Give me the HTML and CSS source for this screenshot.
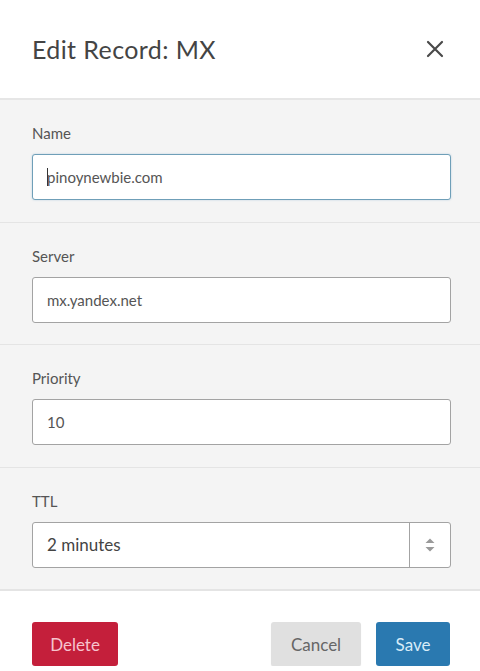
FILE: index.html
```html
<!DOCTYPE html>
<html lang="en">
<head>
    <meta charset="UTF-8">
    <meta name="viewport" content="width=device-width, initial-scale=1.0">
    <title>Edit Record: MX</title>
    <link rel="stylesheet" href="styles.css">
</head>
<body>

<div class="modal">
    <div class="modal-header">
        <h1>Edit Record: MX</h1>
        <button class="close" aria-label="Close">
            <svg width="18" height="18" viewBox="0 0 18 18">
                <path d="M2 2 L16 16 M16 2 L2 16" stroke="#4a4a4a" stroke-width="2.2" stroke-linecap="round"/>
            </svg>
        </button>
    </div>

    <div class="field">
        <label>Name</label>
        <div class="input focused"><span class="caret"></span>pinoynewbie.com</div>
    </div>

    <div class="field">
        <label>Server</label>
        <div class="input">mx.yandex.net</div>
    </div>

    <div class="field">
        <label>Priority</label>
        <div class="input">10</div>
    </div>

    <div class="field">
        <label>TTL</label>
        <div class="input select">
            <span class="select-value">2 minutes</span>
            <span class="select-arrows">
                <svg width="12" height="16" viewBox="0 0 12 16">
                    <path d="M1.5 6 L6 1.5 L10.5 6 Z M1.5 10 L6 14.5 L10.5 10 Z" fill="#9a9a9a"/>
                </svg>
            </span>
        </div>
    </div>

    <div class="modal-footer">
        <button class="btn btn-delete">Delete</button>
        <div class="footer-right">
            <button class="btn btn-cancel">Cancel</button>
            <button class="btn btn-save">Save</button>
        </div>
    </div>
</div>

</body>
</html>
```

FILE: styles.css
```css
body {
    margin: 0;
    font-family: Lato, "Open Sans", sans-serif;
    background-color: #fff;
    color: #555;
}
.modal {
    width: 480px;
}
.modal-header {
    height: 100px;
    display: flex;
    align-items: center;
    justify-content: space-between;
    padding: 0 36px 0 32px;
    box-sizing: border-box;
    border-bottom: 2px solid #e6e6e6;
}
.modal-header h1 {
    margin: 0;
    font-size: 25px;
    font-weight: normal;
    color: #444;
    letter-spacing: 0.4px;
}
.close {
    border: none;
    background: none;
    padding: 0;
    display: flex;
}
.field {
    background-color: #f4f4f4;
    padding: 23px 29px 21.5px 32px;
    border-bottom: 1px solid #e4e4e4;
    display: flex;
    flex-direction: column;
}
.field label {
    font-size: 15px;
    line-height: 20px;
    color: #555;
    margin-bottom: 11px;
}
.input {
    height: 46px;
    box-sizing: border-box;
    background-color: #fff;
    border: 1.5px solid #a3a3a3;
    border-radius: 3px;
    padding: 0 14px;
    display: flex;
    align-items: center;
    font-size: 15px;
    color: #555;
}
.input.focused {
    border-color: #6f9fb8;
    box-shadow: 0 0 2px rgba(90, 150, 190, 0.4);
}
.caret {
    width: 1px;
    height: 18px;
    background-color: #333;
    margin-right: -1px;
}
.select {
    padding-right: 0;
    font-size: 17px;
    color: #444;
}
.select-value {
    flex: 1;
}
.select-arrows {
    width: 40px;
    height: 100%;
    border-left: 1.5px solid #a3a3a3;
    display: flex;
    align-items: center;
    justify-content: center;
}
.modal-footer {
    border-top: 1px solid #e4e4e4;
    display: flex;
    justify-content: space-between;
    padding: 31px 30px 0 32px;
}
.footer-right {
    display: flex;
    gap: 15px;
}
.btn {
    height: 44px;
    border: none;
    border-radius: 3px;
    font-family: Lato, "Open Sans", sans-serif;
    font-size: 17px;
    padding: 0;
}
.btn-delete {
    width: 86px;
    background-color: #c41f3b;
    color: #f6c4ce;
}
.btn-cancel {
    width: 90px;
    background-color: #e0e0e0;
    color: #666;
    box-shadow: 0 1px 1px rgba(0, 0, 0, 0.1);
}
.btn-save {
    width: 74px;
    background-color: #2a79b0;
    color: #d8ecf8;
}
```
